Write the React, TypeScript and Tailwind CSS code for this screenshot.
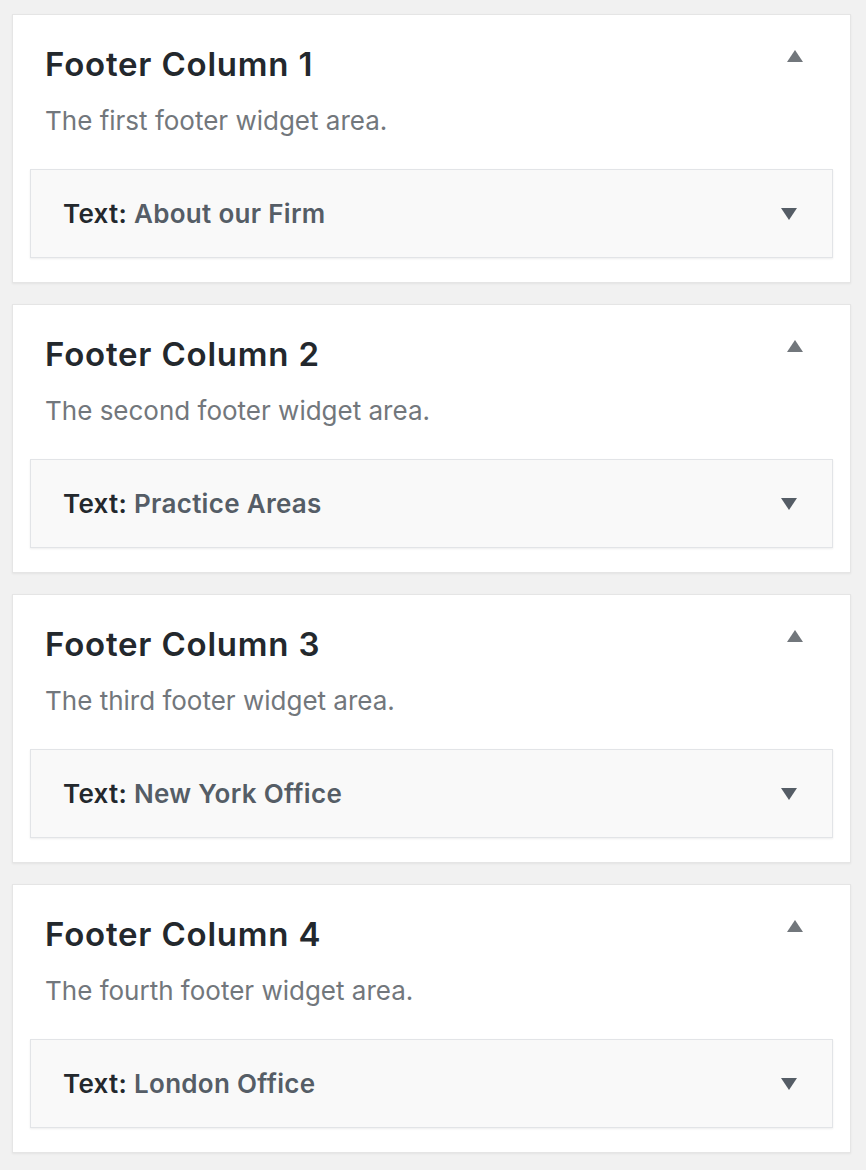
const areas = [
  { title: "Footer Column 1", desc: "The first footer widget area.", widget: "About our Firm" },
  { title: "Footer Column 2", desc: "The second footer widget area.", widget: "Practice Areas" },
  { title: "Footer Column 3", desc: "The third footer widget area.", widget: "New York Office" },
  { title: "Footer Column 4", desc: "The fourth footer widget area.", widget: "London Office" },
];

function Arrow({ up, className }: { up?: boolean; className: string }) {
  return (
    <svg width="16" height="12" viewBox="0 0 16 12" className={className}>
      {up ? <path d="M8 0 L16 12 L0 12 Z" fill="currentColor" /> : <path d="M0 0 L16 0 L8 12 Z" fill="currentColor" />}
    </svg>
  );
}

function SidebarArea({ title, desc, widget }: { title: string; desc: string; widget: string }) {
  return (
    <div className="bg-white border border-[#e5e5e5] shadow-[0_1px_2px_rgba(0,0,0,0.06)] h-[269px] px-[17px]">
      <div className="flex items-start justify-between pl-[15px] pr-[30px] pt-[29px]">
        <h2 className="text-[33px] leading-[40px] font-semibold text-[#23282d] tracking-[0.8px]">{title}</h2>
        <Arrow up className="text-[#72777c] mt-[6px]" />
      </div>
      <p className="pl-[15px] mt-[21px] text-[26px] leading-[32px] text-[#72777c]">{desc}</p>
      <div className="mt-[32px] h-[89px] bg-[#f9f9f9] border border-[#e2e4e7] shadow-[0_1px_2px_rgba(0,0,0,0.07)] flex items-center justify-between pl-[32px] pr-[35px]">
        <span className="text-[26px] font-semibold text-[#555d66] tracking-[0.3px]">
          <span className="text-[#23282d]">Text:</span> {widget}
        </span>
        <Arrow className="text-[#555d66]" />
      </div>
    </div>
  );
}

export default function App() {
  return (
    <div
      className="min-h-[1170px] bg-[#f1f1f1] pt-[14px] pl-[12px] pr-[15px] flex flex-col gap-[21px]"
      style={{ fontFamily: "Inter, 'Noto Sans', sans-serif" }}
    >
      {areas.map((a) => (
        <SidebarArea key={a.title} {...a} />
      ))}
    </div>
  );
}
